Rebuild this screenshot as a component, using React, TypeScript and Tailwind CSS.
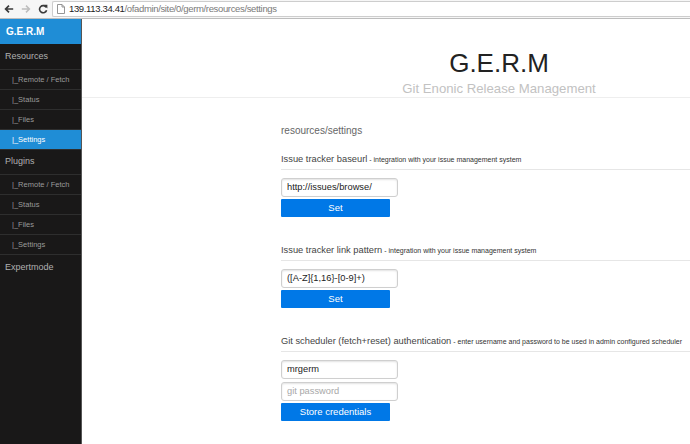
import React from "react";

function Back() {
  return (
    <svg width="10" height="10" viewBox="0 0 10 10" fill="none">
      <path d="M9.2 5H2M5 1.6L1.6 5L5 8.4" stroke="#3a3a3a" strokeWidth="1.7" />
    </svg>
  );
}
function Fwd() {
  return (
    <svg width="10" height="10" viewBox="0 0 10 10" fill="none">
      <path d="M0.8 5H8M5 1.6L8.4 5L5 8.4" stroke="#bdbdbd" strokeWidth="1.5" />
    </svg>
  );
}
function Reload() {
  return (
    <svg width="10" height="10" viewBox="0 0 10 10" fill="none">
      <path d="M8.2 3.3A3.6 3.6 0 1 0 8.6 6.2" stroke="#3a3a3a" strokeWidth="1.6" />
      <path d="M5.6 0.8L9.4 0.8L9.4 4.6Z" fill="#3a3a3a" />
    </svg>
  );
}
function Page() {
  return (
    <svg width="8" height="10" viewBox="0 0 8 10" fill="none">
      <path d="M0.5 0.5H5L7.5 3V9.5H0.5Z" stroke="#8a8a8a" strokeWidth="0.9" fill="#fff" />
      <path d="M5 0.5V3H7.5" stroke="#8a8a8a" strokeWidth="0.9" />
    </svg>
  );
}

const top = "h-[25px] border-b border-[#2e2e2e] flex items-center pl-[5px] text-[9px] text-[#b0b0b0]";
const sub = "h-[20px] border-b border-[#2e2e2e] flex items-center pl-[12px] text-[7.5px] text-[#9a9a9a]";
const subActive = "h-[20px] border-b border-[#2e2e2e] flex items-center pl-[12px] text-[7.5px] text-white bg-[#1f8dd6]";

function Heading({ title, note }: { title: string; note: string }) {
  return (
    <div className="border-b border-[#e6e6e6] pb-[4px] leading-[12px] text-[9.3px] text-[#444] whitespace-nowrap">
      {title}
      <span className="text-[7px] leading-none text-[#333]"> - {note}</span>
    </div>
  );
}

function Input({ value, placeholder }: { value?: string; placeholder?: string }) {
  return (
    <div className="w-[117px] h-[19px] border border-[#cfcfcf] rounded-[3px] shadow-[inset_0_1px_2px_#e2e2e2] flex items-center px-[5px] text-[9.3px]">
      {value ? <span className="text-[#222]">{value}</span> : <span className="text-[#a8a8a8]">{placeholder}</span>}
    </div>
  );
}

function Btn({ label }: { label: string }) {
  return (
    <div className="w-[109px] h-[18px] bg-[#0078e7] rounded-[1px] flex items-center justify-center text-white text-[9.5px]">
      {label}
    </div>
  );
}

export default function App() {
  return (
    <div className="w-[690px] h-[444px] overflow-hidden bg-white flex flex-col font-['Liberation_Sans',Arial,sans-serif]">
      <div className="h-[19px] shrink-0 bg-[#f6f6f6] border-b border-[#bdbdbd] flex items-start">
        <div className="w-[52px] h-[18px] flex items-center pl-[4px] gap-[7px]">
          <Back />
          <Fwd />
          <Reload />
        </div>
        <div className="flex-1 h-[16px] mt-[1px] bg-white border border-r-0 border-[#cdcdcd] rounded-l-[2px] flex items-center pl-[4px] gap-[4px]">
          <Page />
          <span className="text-[9.5px] tracking-[-0.35px] leading-none">
            <span className="text-[#222]">139.113.34.41</span>
            <span className="text-[#7a7a7a]">/ofadmin/site/0/germ/resources/settings</span>
          </span>
        </div>
      </div>

      <div className="flex flex-1 min-h-0">
        <div className="w-[82px] shrink-0 bg-[#191818] border-r border-[#555]">
          <div className="h-[25px] bg-[#1f8dd6] flex items-center pl-[6px] text-white font-bold text-[10px]">G.E.R.M</div>
          <div className={top + " h-[26px]"}>Resources</div>
          <div className={sub}>|_Remote / Fetch</div>
          <div className={sub}>|_Status</div>
          <div className={sub}>|_Files</div>
          <div className={subActive}>|_Settings</div>
          <div className={top}>Plugins</div>
          <div className={sub}>|_Remote / Fetch</div>
          <div className={sub}>|_Status</div>
          <div className={sub}>|_Files</div>
          <div className={sub}>|_Settings</div>
          <div className={top + " border-b-0"}>Expertmode</div>
        </div>

        <div className="flex-1 overflow-hidden">
          <div className="w-[834px] text-center border-b border-[#eee] pt-[29px]">
            <div className="text-[26px] leading-[30px] text-[#222]">G.E.R.M</div>
            <div className="text-[13.2px] leading-[16px] mt-[3px] text-[#c2c2c2]">Git Enonic Release Management</div>
          </div>

          <div className="pl-[199px]">
            <div className="mt-[27px] text-[10px] leading-[12px] text-[#666]">resources/settings</div>

            <div className="mt-[16px]">
              <Heading title="Issue tracker baseurl" note="integration with your issue management system" />
              <div className="mt-[8px] flex flex-col gap-[2px]">
                <Input value="http://issues/browse/" />
                <Btn label="Set" />
              </div>
            </div>

            <div className="mt-[27px]">
              <Heading title="Issue tracker link pattern" note="integration with your issue management system" />
              <div className="mt-[8px] flex flex-col gap-[2px]">
                <Input value="([A-Z]{1,16}-[0-9]+)" />
                <Btn label="Set" />
              </div>
            </div>

            <div className="mt-[27px]">
              <Heading
                title="Git scheduler (fetch+reset) authentication"
                note="enter username and password to be used in admin configured scheduler"
              />
              <div className="mt-[8px] flex flex-col">
                <Input value="mrgerm" />
                <div className="mt-[3px]">
                  <Input placeholder="git password" />
                </div>
                <div className="mt-[2px]">
                  <Btn label="Store credentials" />
                </div>
              </div>
            </div>
          </div>
        </div>
      </div>
    </div>
  );
}
